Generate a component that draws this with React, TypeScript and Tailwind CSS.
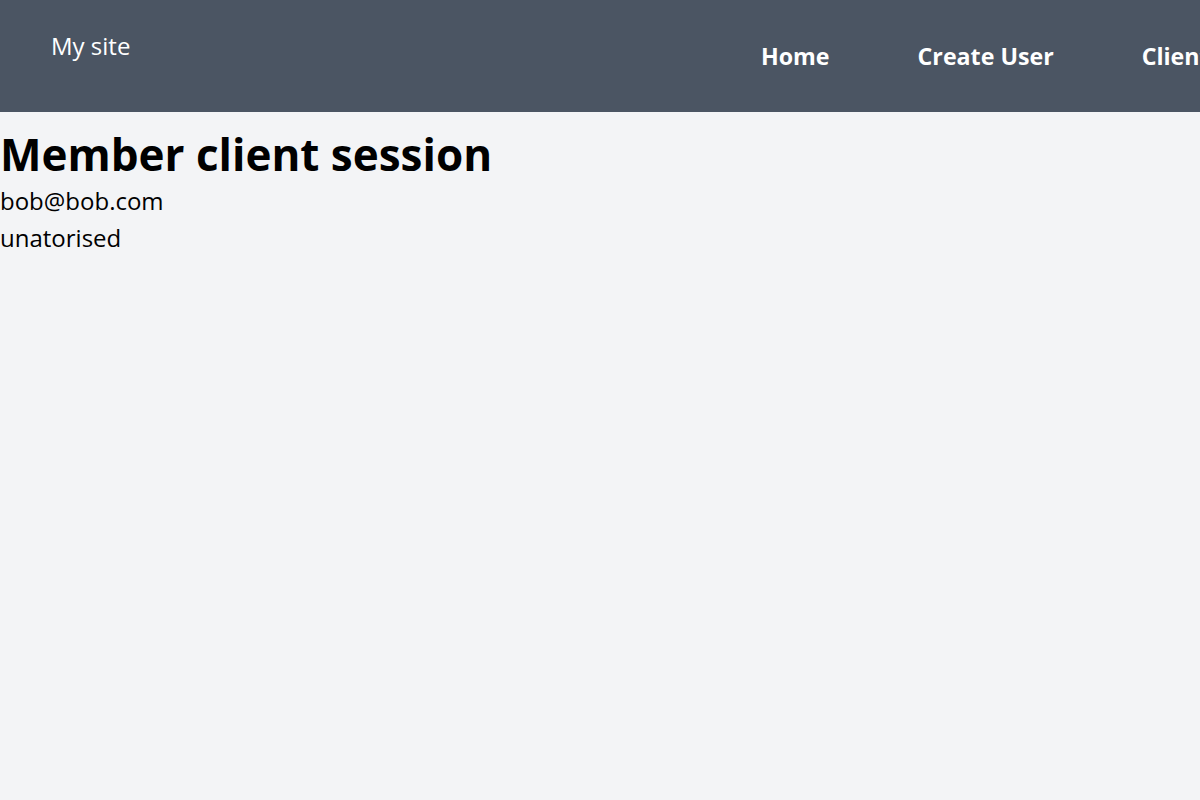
export default function App() {
  return (
    <div className="min-h-[800px] bg-[#f3f4f6] text-black" style={{ fontFamily: '"Open Sans", "Noto Sans", sans-serif' }}>
      <header className="h-[112px] bg-[#4b5563] flex overflow-hidden whitespace-nowrap">
        <div className="w-[717px] shrink-0 pl-[51px] pt-[30px] text-[24px] leading-[32px] text-white">My site</div>
        <nav className="flex shrink-0 pt-[40px]">
          <a className="px-[44px] text-[23.2px] leading-[32px] font-bold text-white">Home</a>
          <a className="px-[44px] text-[23.2px] leading-[32px] font-bold text-white">Create User</a>
          <a className="px-[44px] text-[23.2px] leading-[32px] font-bold text-white">Client</a>
        </nav>
      </header>
      <main className="pt-[14px]">
        <h1 className="text-[44px] leading-[56px] font-bold">Member client session</h1>
        <p className="text-[24px] leading-[37px]">bob@bob.com</p>
        <p className="text-[24px] leading-[37px]">unatorised</p>
      </main>
    </div>
  );
}
